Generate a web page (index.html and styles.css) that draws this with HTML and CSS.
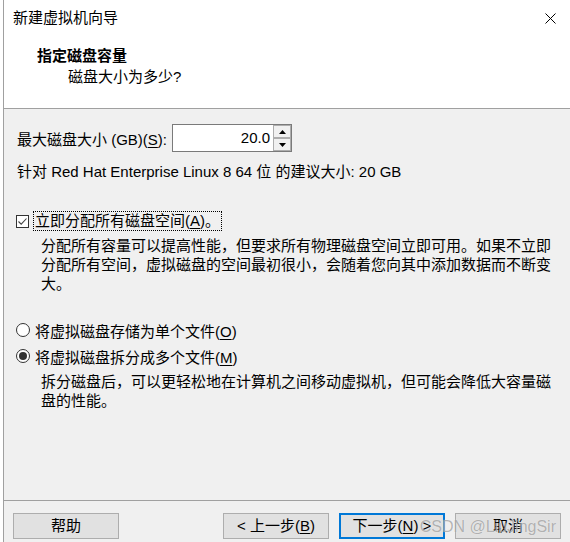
FILE: index.html
```html
<!DOCTYPE html>
<html lang="zh-CN">
<head>
    <meta charset="UTF-8">
    <title>新建虚拟机向导</title>
    <link rel="stylesheet" href="styles.css">
</head>
<body>
    <div class="window">
        <!-- 标题栏 -->
        <div class="titlebar">
            <span class="title">新建虚拟机向导</span>
            <svg class="close" width="11" height="11" viewBox="0 0 11 11">
                <path d="M0.5 0.5 L10.5 10.5 M10.5 0.5 L0.5 10.5" stroke="#000" stroke-width="1" fill="none"/>
            </svg>
        </div>

        <!-- 页头 -->
        <div class="header">
            <div class="header-title">指定磁盘容量</div>
            <div class="header-sub">磁盘大小为多少?</div>
        </div>

        <div class="content">
            <div class="size-row">
                <span>最大磁盘大小 (GB)(<u>S</u>):</span>
                <div class="spin">
                    <div class="spin-value">20.0</div>
                    <div class="spin-btns">
                        <div class="spin-btn">
                            <svg width="7" height="4" viewBox="0 0 7 4"><path d="M0 4 L3.5 0 L7 4 Z" fill="#000"/></svg>
                        </div>
                        <div class="spin-btn">
                            <svg width="7" height="4" viewBox="0 0 7 4"><path d="M0 0 L7 0 L3.5 4 Z" fill="#000"/></svg>
                        </div>
                    </div>
                </div>
            </div>
            <p class="hint">针对 Red Hat Enterprise Linux 8 64 位 的建议大小: 20 GB</p>

            <div class="option check-row">
                <span class="checkbox">
                    <svg width="11" height="11" viewBox="0 0 11 11"><path d="M1.5 5.5 L4.2 8.2 L9.5 2.5" stroke="#444" stroke-width="1.1" fill="none"/></svg>
                </span>
                <span class="focus">立即分配所有磁盘空间(<u>A</u>)。</span>
            </div>
            <p class="desc">分配所有容量可以提高性能，但要求所有物理磁盘空间立即可用。如果不立即<br>分配所有空间，虚拟磁盘的空间最初很小，会随着您向其中添加数据而不断变<br>大。</p>

            <div class="option radio-row first">
                <span class="radio"></span>
                <span>将虚拟磁盘存储为单个文件(<u>O</u>)</span>
            </div>
            <div class="option radio-row">
                <span class="radio checked"></span>
                <span>将虚拟磁盘拆分成多个文件(<u>M</u>)</span>
            </div>
            <p class="desc desc-split">拆分磁盘后，可以更轻松地在计算机之间移动虚拟机，但可能会降低大容量磁<br>盘的性能。</p>
        </div>

        <!-- 底部按钮 -->
        <div class="footer">
            <button class="help">帮助</button>
            <button>&lt; 上一步(<u>B</u>)</button>
            <button class="default">下一步(<u>N</u>) &gt;</button>
            <button>取消</button>
        </div>

        <div class="watermark">CSDN @LiuJingSir</div>
    </div>
</body>
</html>
```

FILE: styles.css
```css
body {
    margin: 0;
    background: #ffffff;
    font-family: "Liberation Sans", "Noto Sans CJK SC", sans-serif;
    font-size: 15px;
    color: #000000;
    overflow: hidden;
}

u {
    text-underline-offset: 2px;
}

.window {
    position: relative;
    margin-left: 3px;
    height: 542px;
    border-left: 1px solid #a0a0a0;
    display: flex;
    flex-direction: column;
}

/* 标题栏 */
.titlebar {
    height: 36px;
    flex-shrink: 0;
    display: flex;
    align-items: center;
    justify-content: space-between;
    padding: 0 14px 0 9px;
}

.title {
    line-height: 20px;
}

/* 页头 */
.header {
    height: 73px;
    flex-shrink: 0;
    box-sizing: border-box;
    border-bottom: 1px solid #a0a0a0;
    padding: 10px 0 0 33px;
}

.header-title {
    font-weight: bold;
    line-height: 20px;
}

.header-sub {
    margin-top: 1px;
    padding-left: 31px;
    line-height: 20px;
}

/* 内容区 */
.content {
    flex: 1;
    background: #f0f0f0;
    padding: 15px 13px 0;
}

.size-row {
    display: flex;
    align-items: center;
    height: 28px;
}

.spin {
    display: flex;
    width: 120px;
    height: 28px;
    box-sizing: border-box;
    margin-left: 5px;
    border: 1px solid #7a7a7a;
    background: #ffffff;
}

.spin-value {
    flex: 1;
    text-align: right;
    line-height: 26px;
    padding-right: 3px;
}

.spin-btns {
    width: 18px;
    display: flex;
    flex-direction: column;
}

.spin-btn {
    flex: 1;
    display: flex;
    align-items: center;
    justify-content: center;
    border: 1px solid #adadad;
    background: #f0f0f0;
}

.hint {
    margin: 10px 0 0;
    line-height: 19px;
}

.option {
    display: flex;
    align-items: center;
    height: 20px;
    margin-left: -1px;
}

.check-row {
    margin-top: 30px;
    gap: 4px;
}

.checkbox {
    width: 13px;
    height: 13px;
    box-sizing: border-box;
    border: 1px solid #333333;
    background: #ffffff;
    display: flex;
    align-items: center;
    justify-content: center;
}

.focus {
    border: 1px dotted #000000;
    padding: 0 1px;
    line-height: 18px;
}

.desc {
    margin: 5px 0 0 24px;
    line-height: 19px;
}

.radio-row {
    margin-top: 6px;
    gap: 5px;
}

.radio-row.first {
    margin-top: 27px;
}

.radio {
    width: 14px;
    height: 14px;
    box-sizing: border-box;
    border: 1px solid #333333;
    border-radius: 50%;
    background: #ffffff;
    display: flex;
    align-items: center;
    justify-content: center;
}

.radio.checked::after {
    content: "";
    width: 8px;
    height: 8px;
    border-radius: 50%;
    background: #333333;
}

.desc-split {
    margin-top: 6px;
}

/* 底部按钮 */
.footer {
    height: 42px;
    flex-shrink: 0;
    box-sizing: border-box;
    border-top: 1px solid #a0a0a0;
    background: #f0f0f0;
    padding: 12px 9px 0;
    display: flex;
    align-items: flex-start;
    gap: 10px;
}

button {
    width: 106px;
    height: 26px;
    box-sizing: border-box;
    padding: 0;
    font-family: inherit;
    font-size: 15px;
    line-height: 22px;
    color: #000000;
    background: #e1e1e1;
    border: 1px solid #adadad;
}

button.help {
    margin-right: auto;
}

button.default {
    border: 2px solid #0078d7;
}

.watermark {
    position: absolute;
    right: 14px;
    top: 517px;
    font-family: "Liberation Sans", Arial, sans-serif;
    font-size: 16px;
    line-height: 20px;
    color: rgba(120, 120, 120, 0.55);
    text-shadow: 0 0 1px rgba(255, 255, 255, 0.7);
}
```
